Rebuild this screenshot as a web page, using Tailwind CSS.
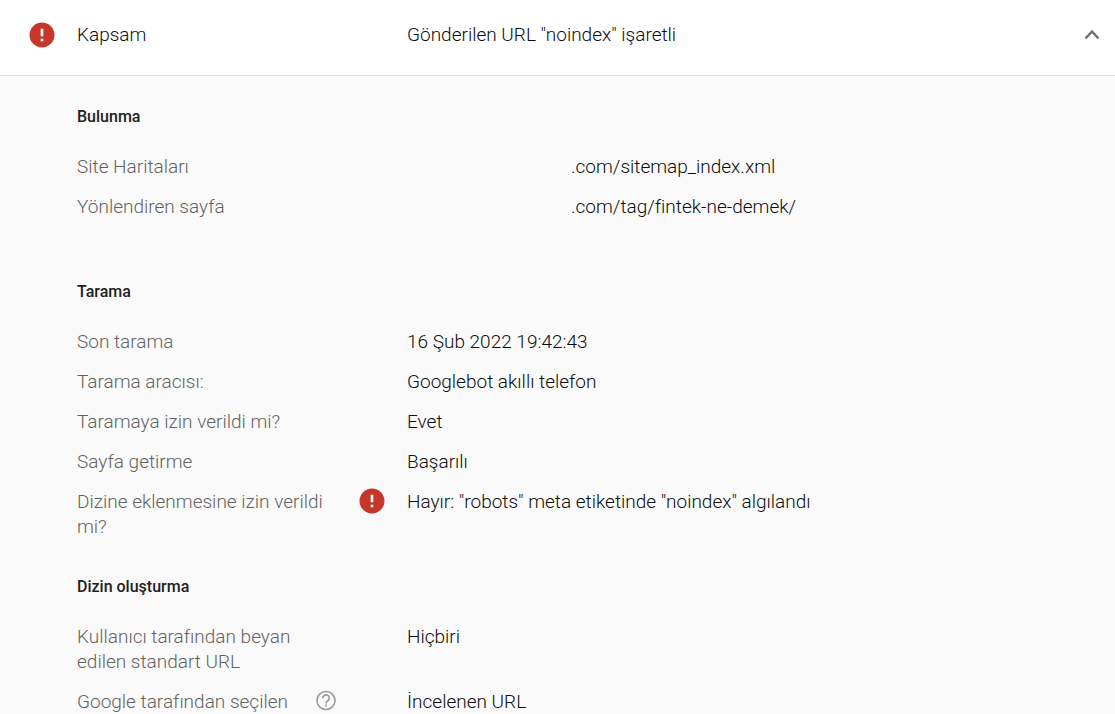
<!DOCTYPE html>
<html lang="tr">
<head>
  <meta charset="UTF-8" />
  <meta name="viewport" content="width=device-width, initial-scale=1" />
  <title>Kapsam</title>
  <script src="https://cdn.jsdelivr.net/npm/@tailwindcss/browser@4"></script>
</head>
<body class="h-screen overflow-hidden bg-[#fafafa] font-[Roboto,sans-serif] font-light text-[19px] leading-[25px] text-[#0c0c0c]">

  <!-- Header -->
  <header class="bg-white border-b border-[#e0e0e0] pl-[77px] pr-[15px] pt-[22px] pb-7 flex items-center relative">
    <svg class="absolute left-[29px] top-[22px] size-[26px]" viewBox="0 0 26 26" aria-hidden="true">
      <circle cx="13" cy="13" r="12.5" fill="#c5372a" />
      <path d="M11.7 6.8h2.6v7.5h-2.6zM11.7 16.7h2.6v2.6h-2.6z" fill="#fff" />
    </svg>
    <h1 class="w-[330px] shrink-0">Kapsam</h1>
    <p class="grow">Gönderilen URL "noindex" işaretli</p>
    <button type="button" aria-label="Daralt" aria-expanded="true">
      <svg class="block w-4 h-[25px]" viewBox="0 0 16 25" fill="none" stroke="#757575" stroke-width="2.4" aria-hidden="true">
        <path d="M1.5 16.4 8 9.6l6.5 6.8" />
      </svg>
    </button>
  </header>

  <main class="pl-[77px] pr-3 pt-7">
    <section class="mb-[60px]">
      <h2 class="text-base leading-[25px] font-medium text-[#212121] mb-[25px]">Bulunma</h2>
      <dl class="grid grid-cols-[330px_1fr] gap-y-[15px]">
        <dt class="text-[#626262]">Site Haritaları</dt>
        <dd class="pl-[164px]">.com/sitemap_index.xml</dd>
        <dt class="text-[#626262]">Yönlendiren sayfa</dt>
        <dd class="pl-[164px]">.com/tag/fintek-ne-demek/</dd>
      </dl>
    </section>

    <section class="mb-[35px]">
      <h2 class="text-base leading-[25px] font-medium text-[#212121] mb-[25px]">Tarama</h2>
      <dl class="grid grid-cols-[330px_1fr] gap-y-[15px]">
        <dt class="text-[#626262]">Son tarama</dt>
        <dd>16 Şub 2022 19:42:43</dd>
        <dt class="text-[#626262]">Tarama aracısı:</dt>
        <dd>Googlebot akıllı telefon</dd>
        <dt class="text-[#626262]">Taramaya izin verildi mi?</dt>
        <dd>Evet</dd>
        <dt class="text-[#626262]">Sayfa getirme</dt>
        <dd>Başarılı</dd>
        <dt class="text-[#626262] pr-[60px]">Dizine eklenmesine izin verildi mi?</dt>
        <dd class="relative">
          <svg class="absolute -left-12 -top-px size-[26px]" viewBox="0 0 26 26" aria-hidden="true">
            <circle cx="13" cy="13" r="12.5" fill="#c5372a" />
            <path d="M11.7 6.8h2.6v7.5h-2.6zM11.7 16.7h2.6v2.6h-2.6z" fill="#fff" />
          </svg>
          Hayır: "robots" meta etiketinde "noindex" algılandı
        </dd>
      </dl>
    </section>

    <section>
      <h2 class="text-base leading-[25px] font-medium text-[#212121] mb-[25px]">Dizin oluşturma</h2>
      <dl class="grid grid-cols-[330px_1fr] gap-y-[15px]">
        <dt class="text-[#626262] pr-[100px]">Kullanıcı tarafından beyan edilen standart URL</dt>
        <dd>Hiçbiri</dd>
        <dt class="text-[#626262] flex">
          <span class="w-[238px]">Google tarafından seçilen</span>
          <button type="button" aria-label="Yardım">
            <svg class="block w-[22px] h-[25px]" viewBox="0 0 22 25" fill="none" stroke="#9a9a9a" stroke-width="1.6" aria-hidden="true">
              <circle cx="11" cy="11.5" r="9" />
              <path d="M7.8 9.3a3.2 3.2 0 1 1 5 2.5c-1.1.8-1.8 1.2-1.8 2.7M11 15.6v1.8" />
            </svg>
          </button>
        </dt>
        <dd>İncelenen URL</dd>
      </dl>
    </section>
  </main>

</body>
</html>
